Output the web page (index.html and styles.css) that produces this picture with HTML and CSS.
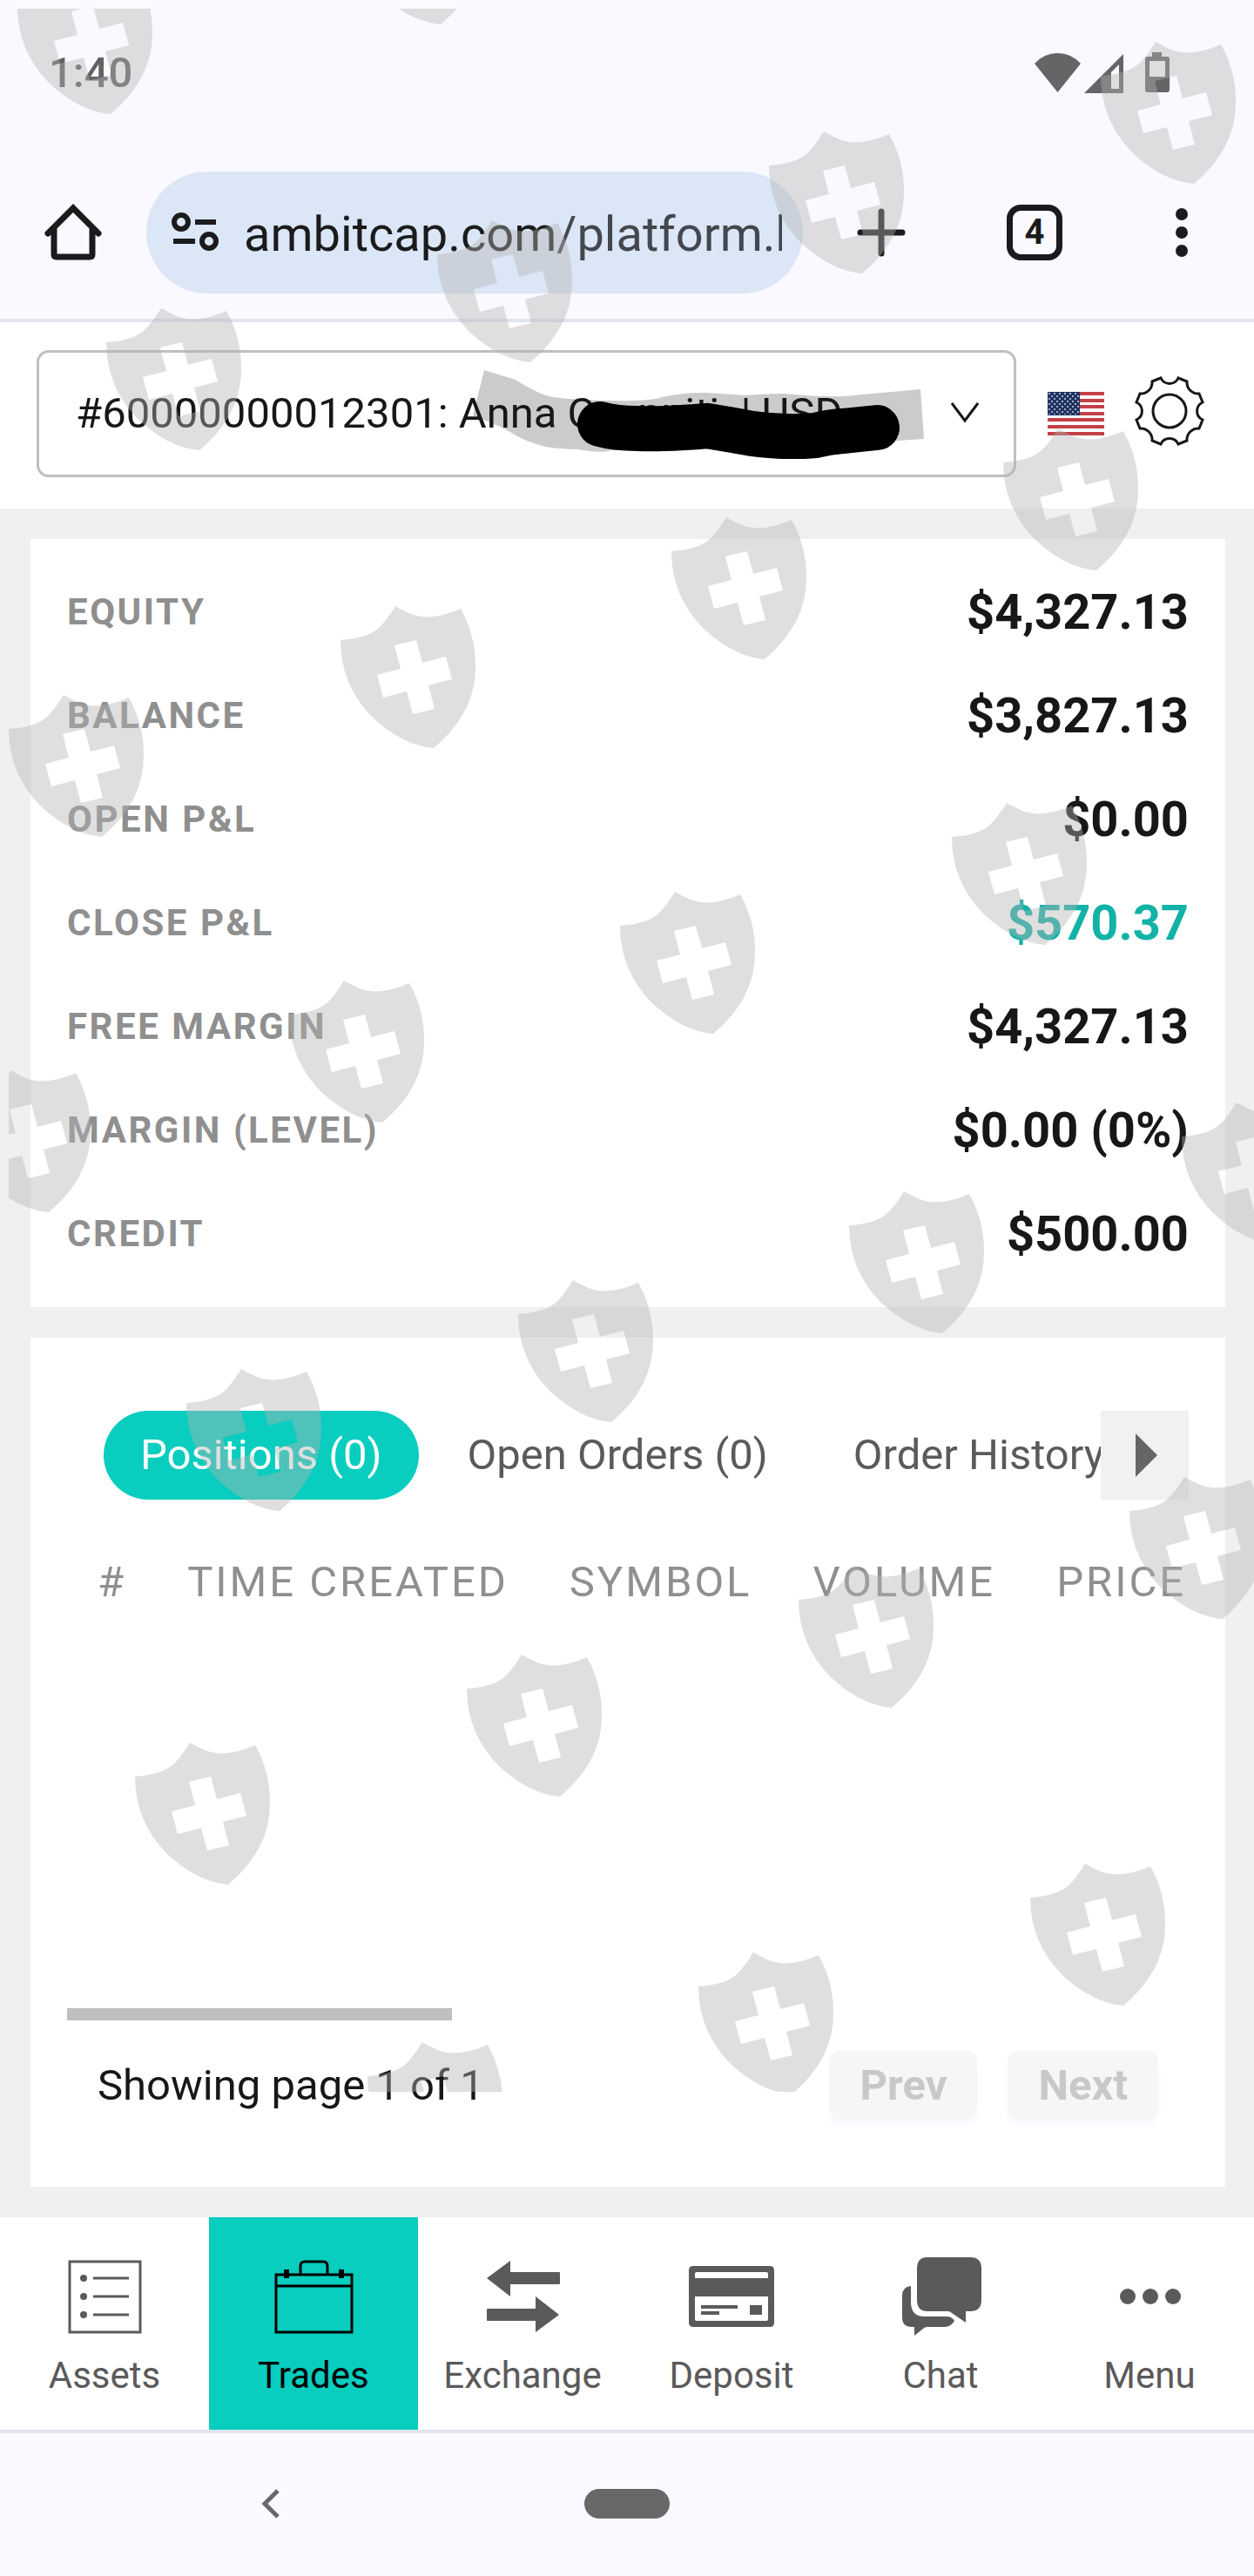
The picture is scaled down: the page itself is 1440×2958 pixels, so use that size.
FILE: index.html
```html
<!DOCTYPE html>
<html lang="en">
<head>
    <meta charset="utf-8">
    <meta name="viewport" content="width=device-width, initial-scale=1">
    <title>Trades</title>
    <link rel="stylesheet" href="styles.css">
</head>
<body>
<div class="status-bar">
    <span class="clock">1:40</span>
    <svg class="status-icons" width="156" height="48" viewBox="0 0 156 48">
        <path d="M26.500 46L0 13Q11 1 26.500 1T53 13Z"/>
        <path fill-rule="evenodd" d="M57 47L102 2V47ZM88 42H97V14L88 23Z"/>
        <path fill-rule="evenodd" d="M135 0H146V5H152Q155 5 155 8V43Q155 46 152 46H130Q127 46 127 43V8Q127 5 130 5H135ZM132 10V28H150V10Z"/>
    </svg>
</div>

<div class="toolbar">
    <button class="tool" aria-label="Home">
        <svg width="66" height="66" viewBox="0 0 66 66" class="line"><path d="M4 34L33 5L62 34M11 29V58Q11 61 14 61H52Q55 61 55 58V29"/></svg>
    </button>
    <div class="address">
        <svg width="54" height="46" viewBox="0 0 54 46" class="line thin"><circle cx="11" cy="11" r="8"/><path d="M27 11H51M2 33H27"/><circle cx="43" cy="33" r="8"/></svg>
        <input type="text" class="url" aria-label="Address" value="ambitcap.com/platform.html" readonly>
    </div>
    <button class="tool" aria-label="New tab">
        <svg width="56" height="56" viewBox="0 0 56 56" class="line"><path d="M28 4V52M4 28H52"/></svg>
    </button>
    <button class="tool" aria-label="Open tabs"><span class="tab-count">4</span></button>
    <button class="tool" aria-label="More">
        <svg width="16" height="58" viewBox="0 0 16 58"><circle cx="8" cy="8" r="7"/><circle cx="8" cy="29" r="7"/><circle cx="8" cy="50" r="7"/></svg>
    </button>
</div>

<header class="header">
    <div class="account">
        <svg class="shade" width="1125" height="146" viewBox="0 0 1125 146"><path d="M514 23L550 34Q575 50 589 53Q605 57 660 58Q690 59 711 56Q740 48 770 49Q800 51 815 52Q835 50 860 50Q900 54 928 53L959 50L1015 45L1019 102L989 104L660 115Q650 119 622 114Q590 113 581 110Q565 106 550 98Q540 91 525 85L501 75Z"/></svg>
        <select class="account-select" aria-label="Account">
            <option>#60000000012301: Anna C&nbsp;&nbsp;&nbsp;&nbsp;nniti&nbsp;&nbsp;| USD</option>
        </select>
        <svg class="marker" width="1125" height="146" viewBox="0 0 1125 146"><path d="M647 85Q665 90 690 90Q725 91 770 87Q795 91 822 96Q860 101 894 98Q910 94 925 93L965 89"/></svg>
        <svg class="caret" width="32" height="24" viewBox="0 0 32 24"><path d="M1 1L16 21L31 1"/></svg>
    </div>
    <button class="icon-button" aria-label="Language">
        <svg width="65" height="50" viewBox="0 0 65 50">
            <defs>
                <pattern id="stars" width="6" height="6" patternUnits="userSpaceOnUse"><circle cx="2" cy="2" r="1"/><circle cx="5" cy="5" r="1"/></pattern>
            </defs>
            <rect width="65" height="50" fill="#fff"/>
            <path d="M0 2H65M0 10H65M0 17H65M0 25H65M0 32H65M0 40H65M0 48H65" stroke="#c34146" stroke-width="4"/>
            <rect width="37" height="27" fill="#1f3363"/>
            <rect x="1" y="1" width="35" height="25" fill="url(#stars)" class="stars"/>
        </svg>
    </button>
    <button class="icon-button" aria-label="Settings">
        <svg width="78" height="84" viewBox="0 0 78 84" class="gear">
            <path d="M19 5L29 1A11 11 0 0 0 49 1L59 5A13 13 0 0 0 73 19L77 29A11 11 0 0 0 77 49L73 59A13 13 0 0 0 59 73L49 77A11 11 0 0 0 29 77L19 73A13 13 0 0 0 5 59L1 49A11 11 0 0 0 1 29L5 19A13 13 0 0 0 19 5Z"/>
            <circle cx="39" cy="39" r="19"/>
        </svg>
    </button>
</header>

<main class="content">
    <dl class="card stats">
        <div class="stat"><dt>EQUITY</dt><dd>$4,327.13</dd></div>
        <div class="stat"><dt>BALANCE</dt><dd>$3,827.13</dd></div>
        <div class="stat"><dt>OPEN P&amp;L</dt><dd>$0.00</dd></div>
        <div class="stat"><dt>CLOSE P&amp;L</dt><dd class="profit">$570.37</dd></div>
        <div class="stat"><dt>FREE MARGIN</dt><dd>$4,327.13</dd></div>
        <div class="stat"><dt>MARGIN (LEVEL)</dt><dd>$0.00 (0%)</dd></div>
        <div class="stat"><dt>CREDIT</dt><dd>$500.00</dd></div>
    </dl>

    <section class="card trades">
        <div class="tabs">
            <div class="tab-list">
                <button class="tab active">Positions (0)</button>
                <button class="tab">Open Orders (0)</button>
                <button class="tab">Order History</button>
            </div>
            <button class="tab-next" aria-label="More tabs">
                <svg width="25" height="50" viewBox="0 0 25 50"><path d="M0 0L25 25L0 50Z"/></svg>
            </button>
        </div>
        <div class="table-wrap">
            <table>
                <thead>
                    <tr>
                        <th>#</th>
                        <th>TIME CREATED</th>
                        <th>SYMBOL</th>
                        <th>VOLUME</th>
                        <th>PRICE</th>
                    </tr>
                </thead>
            </table>
        </div>
        <div class="scrollbar"></div>
        <div class="pager">
            <span class="pager-text">Showing page 1 of 1</span>
            <button class="page-button" disabled>Prev</button>
            <button class="page-button" disabled>Next</button>
        </div>
    </section>
</main>

<nav class="bottom-nav">
    <a href="#assets">
        <svg width="98" height="98" viewBox="0 0 98 98"><path class="stroke" d="M9 9H90V90H9ZM36 28H77M36 49H77M36 70H77"/><circle cx="25" cy="28" r="4"/><circle cx="25" cy="49" r="4"/><circle cx="25" cy="70" r="4"/></svg>
        Assets
    </a>
    <a href="#trades" class="current">
        <svg width="98" height="98" viewBox="0 0 98 98"><path class="stroke" d="M6 24H93V90H6ZM6 37H93M34 23V14Q34 9 39 9H60Q65 9 65 14V23"/><path d="M15 18H21V28H15ZM78 18H84V28H78Z"/></svg>
        Trades
    </a>
    <a href="#exchange">
        <svg width="98" height="98" viewBox="0 0 98 98"><path d="M8 28L35 8V21H91Q92 21 92 22V34Q92 35 91 35H35V49ZM91 70L64 90V77H9Q8 77 8 76V64Q8 63 9 63H64V49Z"/></svg>
        Exchange
    </a>
    <a href="#deposit">
        <svg width="98" height="98" viewBox="0 0 98 98"><path fill-rule="evenodd" d="M5 14H93Q98 14 98 19V79Q98 84 93 84H5Q0 84 0 79V19Q0 14 5 14ZM9 21Q7 21 7 23V28H91V23Q91 21 89 21ZM7 49V75Q7 77 9 77H89Q91 77 91 75V49ZM14 59H56V63H14ZM14 66H35V70H14ZM70 59H84V70H70Z"/></svg>
        Deposit
    </a>
    <a href="#chat">
        <svg width="98" height="98" viewBox="0 0 98 98"><path d="M34 4H83Q96 4 96 17V53Q96 66 83 66H78V79L62 68Q60 66 58 66H34Q22 66 22 53V17Q22 4 34 4Z"/><path d="M15 37V57Q16 72 30 72H56Q62 72 65 77Q61 84 54 84H34Q31 84 29 86L19 94V84H16Q5 84 5 73V48Q5 38 15 37Z"/></svg>
        Chat
    </a>
    <a href="#menu">
        <svg width="98" height="98" viewBox="0 0 98 98"><circle cx="24" cy="49" r="9"/><circle cx="50" cy="49" r="9"/><circle cx="76" cy="49" r="9"/></svg>
        Menu
    </a>
</nav>

<div class="system-nav">
    <button class="tool" aria-label="Back">
        <svg width="22" height="36" viewBox="0 0 22 36" class="back"><path d="M19 3L4 18L19 33"/></svg>
    </button>
    <button class="home-pill" aria-label="Home screen"></button>
</div>

<!-- shield watermark laid over the page -->
<svg class="watermark" viewBox="0 0 1440 2402">
    <defs>
        <path id="shield" fill-rule="evenodd" d="M0 39Q31 37 44 25Q51 19 63 0Q74 6 81 9Q104 18 138 3Q155 33 155 68Q156 122 107 163Q71 160 36 127Q0 90 0 39ZM62 45L69 72L42 79L49 105L76 98L83 124L108 118L101 91L128 84L121 58L94 65L87 39Z"/>
        <clipPath id="area"><rect x="10" y="10" width="1430" height="2392"/></clipPath>
    </defs>
    <g clip-path="url(#area)">
        <use href="#shield" x="20" y="-32"/>
        <use href="#shield" x="399" y="-135"/>
        <use href="#shield" x="122" y="354"/>
        <use href="#shield" x="502" y="253"/>
        <use href="#shield" x="883" y="151"/>
        <use href="#shield" x="1264" y="48"/>
        <use href="#shield" x="10" y="798"/>
        <use href="#shield" x="391" y="696"/>
        <use href="#shield" x="771" y="594"/>
        <use href="#shield" x="1152" y="492"/>
        <use href="#shield" x="-51" y="1229"/>
        <use href="#shield" x="332" y="1126"/>
        <use href="#shield" x="712" y="1024"/>
        <use href="#shield" x="1093" y="922"/>
        <use href="#shield" x="214" y="1572"/>
        <use href="#shield" x="595" y="1470"/>
        <use href="#shield" x="975" y="1368"/>
        <use href="#shield" x="1357" y="1266"/>
        <use href="#shield" x="155" y="2001"/>
        <use href="#shield" x="536" y="1900"/>
        <use href="#shield" x="917" y="1798"/>
        <use href="#shield" x="1297" y="1696"/>
        <use href="#shield" x="422" y="2345"/>
        <use href="#shield" x="802" y="2242"/>
        <use href="#shield" x="1183" y="2140"/>
    </g>
</svg>
</body>
</html>
```
FILE: styles.css
```css
* {
    box-sizing: border-box;
}

body {
    position: relative;
    margin: 0;
    font-family: Roboto, Arial, sans-serif;
    font-size: 49px;
    line-height: 58px;
    color: #171717;
    background-color: #faf9ff;
    overflow-x: hidden;
}

button, input, select {
    font: inherit;
    color: inherit;
    border: none;
    padding: 0;
    background: none;
}

svg {
    display: block;
    flex: none;
}

.status-bar {
    display: flex;
    justify-content: space-between;
    align-items: center;
    height: 168px;
    padding: 0 96px 0 56px;
    color: #626264;
}

.clock {
    font-weight: 500;
}

.status-icons {
    fill: #656567;
}

.toolbar {
    display: grid;
    grid-template-columns: 168px 1fr 180px 172px 166px;
    align-items: center;
    height: 202px;
    color: #1b1b1d;
    border-bottom: 4px solid #e0e4ee;
}

.tool {
    display: flex;
    justify-content: center;
    align-items: center;
    fill: #1b1b1d;
}

.line {
    fill: none;
    stroke: #1b1b1d;
    stroke-width: 7;
    stroke-linecap: round;
}

.line.thin {
    stroke-width: 6;
    stroke-linecap: butt;
}

.address {
    display: flex;
    align-items: center;
    gap: 29px;
    min-width: 0;
    height: 140px;
    padding: 0 24px 0 29px;
    border-radius: 70px;
    background-color: #dbe7f6;
}

.url {
    flex: 1;
    min-width: 0;
    padding-top: 4px;
    font-size: 56px;
    line-height: 72px;
    color: transparent;
    background: linear-gradient(90deg, #1b1b1d 356px, #44474e 356px);
    -webkit-background-clip: text;
    background-clip: text;
}

.tab-count {
    width: 64px;
    height: 64px;
    border: 7px solid #1b1b1d;
    border-radius: 16px;
    font-size: 40px;
    font-weight: 700;
    line-height: 50px;
}

.header {
    display: flex;
    align-items: center;
    gap: 36px;
    padding: 32px 58px 36px 42px;
    background-color: #fff;
}

.account {
    position: relative;
    flex: 1;
    min-width: 0;
}

.account-select {
    position: relative;
    display: block;
    width: 100%;
    height: 146px;
    padding: 0 42px;
    border: 3px solid #bfbfbf;
    border-radius: 14px;
    appearance: none;
}

.shade, .marker {
    position: absolute;
    top: 0;
    left: 0;
    pointer-events: none;
}

.shade {
    fill: #cbcbcb;
}

.marker {
    fill: none;
    stroke: #000;
    stroke-width: 52;
    stroke-linecap: round;
}

.caret {
    position: absolute;
    top: 60px;
    right: 43px;
    fill: none;
    stroke: #171717;
    stroke-width: 3;
    pointer-events: none;
}

.stars {
    opacity: 0.8;
}

#stars {
    fill: #fff;
}

.gear {
    fill: none;
    stroke: #171717;
    stroke-width: 3;
    overflow: visible;
}

.content {
    display: flex;
    flex-direction: column;
    gap: 35px;
    padding: 35px 33px 35px 35px;
    background-color: #f0f0f0;
}

.card {
    margin: 0;
    background-color: #fff;
}

.stats {
    padding: 24px 42px 25px;
}

.stat {
    display: flex;
    justify-content: space-between;
    align-items: center;
    height: 119px;
}

dt {
    font-size: 42px;
    font-weight: 700;
    letter-spacing: 0.06em;
    color: #8f8f8f;
}

dd {
    margin: 0;
    font-size: 56px;
    font-weight: 700;
}

.profit {
    color: #12b2a7;
}

.trades {
    padding: 84px 42px 77px;
}

.tabs {
    display: flex;
    padding-left: 42px;
}

.tab-list {
    display: flex;
    flex: 1;
    gap: 14px;
    min-width: 0;
    overflow: hidden;
}

.tab {
    flex: none;
    height: 102px;
    padding: 0 42px;
    border-radius: 51px;
    color: #5a5a5a;
}

.tab.active {
    color: #fff;
    background-color: #08cdbf;
}

.tab-next {
    display: flex;
    justify-content: center;
    align-items: center;
    width: 101px;
    padding-left: 4px;
    background-color: #f1f1f1;
    fill: #666;
}

.table-wrap {
    height: 584px;
    padding-top: 66px;
    overflow: hidden;
}

table {
    border-collapse: collapse;
}

th {
    padding: 0 35px;
    font-weight: 400;
    letter-spacing: 0.06em;
    text-align: left;
    white-space: nowrap;
    color: #8f8f8f;
}

.scrollbar {
    width: 442px;
    height: 14px;
    background-color: #bfbfbf;
}

.pager {
    display: flex;
    align-items: center;
    gap: 35px;
    padding: 35px 35px 0;
}

.pager-text {
    flex: 1;
}

.page-button {
    height: 79px;
    padding: 0 35px;
    border-radius: 12px;
    font-weight: 700;
    color: #c8c8c8;
    background-color: #f6f6f6;
    box-shadow: 0 7px 7px #faf9ff;
}

.bottom-nav {
    display: grid;
    grid-template-columns: repeat(6, 1fr);
    background-color: #fff;
    border-bottom: 4px solid #e0e4ee;
}

.bottom-nav a {
    display: flex;
    flex-direction: column;
    align-items: center;
    gap: 17px;
    height: 244px;
    padding-top: 42px;
    font-size: 42px;
    line-height: 50px;
    text-decoration: none;
    color: #5a5a5a;
    fill: #5a5a5a;
    stroke: #5a5a5a;
    stroke-width: 0;
}

.bottom-nav a.current {
    color: #000;
    fill: #000;
    stroke: #000;
    background-color: #08cdbf;
}

.bottom-nav .stroke {
    fill: none;
    stroke-width: 3;
}

.system-nav {
    display: grid;
    grid-template-columns: repeat(3, 1fr);
    align-items: center;
    justify-items: center;
    height: 162px;
    padding: 0 107px;
}

.back {
    fill: none;
    stroke: #686868;
    stroke-width: 5;
}

.home-pill {
    width: 98px;
    height: 34px;
    border-radius: 17px;
    background-color: #686868;
}

.watermark {
    position: absolute;
    top: 0;
    left: 0;
    width: 100%;
    fill: #b4b4b4;
    opacity: 0.41;
    pointer-events: none;
}
```
